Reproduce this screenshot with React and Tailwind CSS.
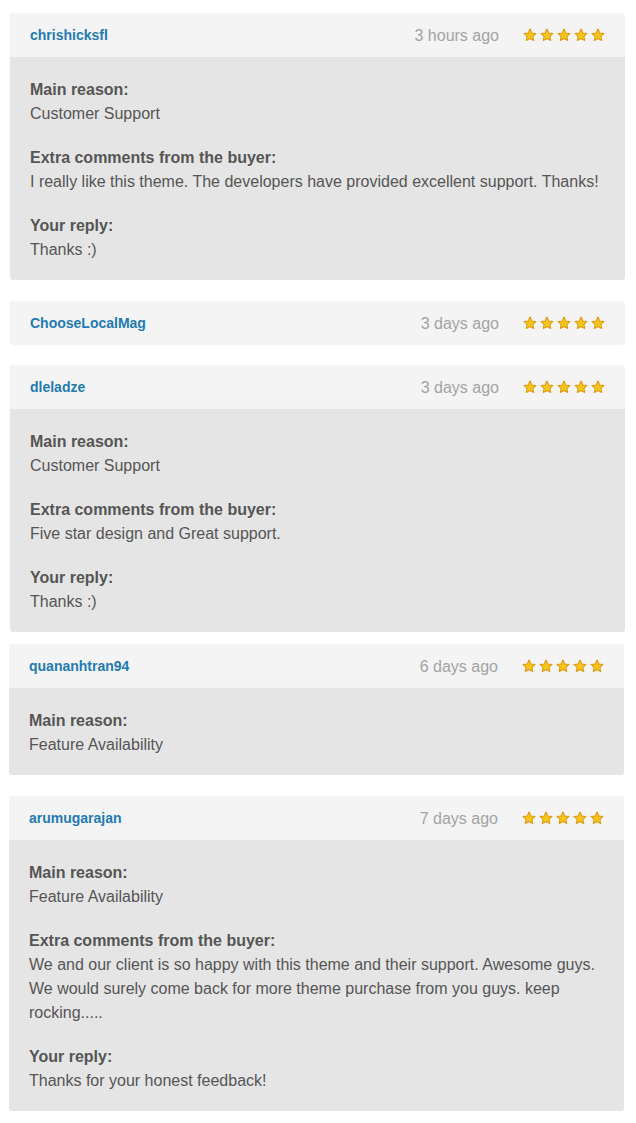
import React from "react";

const reviews = [
  {
    user: "chrishicksfl",
    time: "3 hours ago",
    sections: [
      { label: "Main reason:", text: "Customer Support" },
      {
        label: "Extra comments from the buyer:",
        text: "I really like this theme. The developers have provided excellent support. Thanks!",
      },
      { label: "Your reply:", text: "Thanks :)" },
    ],
  },
  { user: "ChooseLocalMag", time: "3 days ago", sections: [] },
  {
    user: "dleladze",
    time: "3 days ago",
    sections: [
      { label: "Main reason:", text: "Customer Support" },
      { label: "Extra comments from the buyer:", text: "Five star design and Great support." },
      { label: "Your reply:", text: "Thanks :)" },
    ],
  },
  {
    user: "quananhtran94",
    time: "6 days ago",
    sections: [{ label: "Main reason:", text: "Feature Availability" }],
  },
  {
    user: "arumugarajan",
    time: "7 days ago",
    sections: [
      { label: "Main reason:", text: "Feature Availability" },
      {
        label: "Extra comments from the buyer:",
        text: "We and our client is so happy with this theme and their support. Awesome guys. We would surely come back for more theme purchase from you guys. keep rocking.....",
      },
      { label: "Your reply:", text: "Thanks for your honest feedback!" },
    ],
  },
];

function Star() {
  return (
    <svg width="14" height="14" viewBox="0 0 24 24">
      <path
        d="M12 1.8l3.1 6.6 7.2.9-5.3 5 1.4 7.1L12 17.9l-6.4 3.5 1.4-7.1-5.3-5 7.2-.9z"
        fill="#f8c51c"
        stroke="#dc9a0e"
        strokeWidth="1.8"
        strokeLinejoin="round"
      />
    </svg>
  );
}

function ReviewCard({ review, className }) {
  return (
    <div className={"w-[615px] rounded-[3px] overflow-hidden " + (className || "")}>
      <div className="h-[44px] bg-[#f4f4f4] flex items-center pl-[20px] pr-[20px]">
        <div className="text-[14px] font-bold text-[#1f7bb2] flex-1">{review.user}</div>
        <div className="text-[16px] text-[#a3a3a3] mr-[24px] pt-[1px]">{review.time}</div>
        <div className="flex gap-[3px]">
          <Star />
          <Star />
          <Star />
          <Star />
          <Star />
        </div>
      </div>
      {review.sections.length > 0 ? (
        <div className="bg-[#e5e5e5] px-[20px] pt-[21px] pb-[18px] flex flex-col gap-[20px]">
          {review.sections.map((s, i) => (
            <div key={i} className="text-[16px] leading-[24px] text-[#555]">
              <div className="font-bold">{s.label}</div>
              <div>{s.text}</div>
            </div>
          ))}
        </div>
      ) : null}
    </div>
  );
}

export default function App() {
  return (
    <div
      className="w-[636px] min-h-[1123px] bg-white pl-[10px] pt-[13px] pb-[12px]"
      style={{ fontFamily: '"Liberation Sans", Arial, sans-serif' }}
    >
      <ReviewCard review={reviews[0]} className="mb-[21px]" />
      <ReviewCard review={reviews[1]} className="mb-[20px]" />
      <ReviewCard review={reviews[2]} className="mb-[12px]" />
      <ReviewCard review={reviews[3]} className="mb-[21px] -ml-[1px]" />
      <ReviewCard review={reviews[4]} className="-ml-[1px]" />
    </div>
  );
}
